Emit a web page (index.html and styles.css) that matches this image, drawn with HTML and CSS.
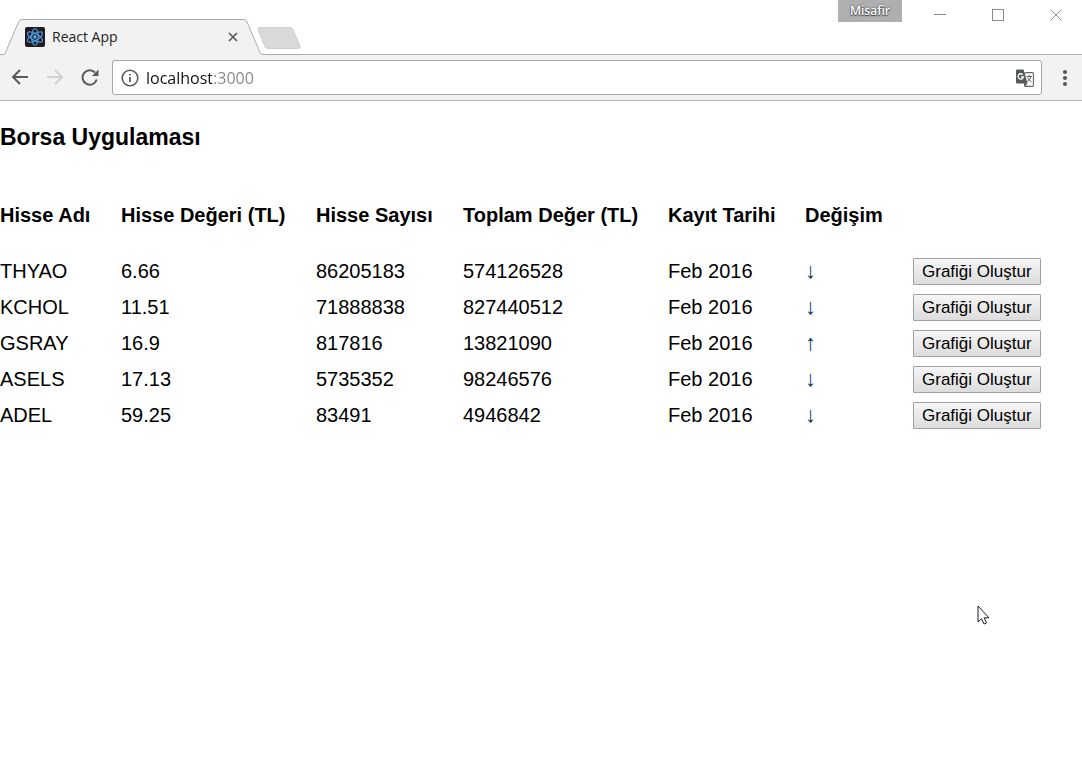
FILE: index.html
```html
<!DOCTYPE html>
<html lang="tr">
<head>
<meta charset="utf-8">
<meta name="viewport" content="width=device-width, initial-scale=1">
<title>React App</title>
<link rel="stylesheet" href="styles.css">
</head>
<body>
<header class="browser">
  <div class="titlebar">
    <div class="tab">
      <svg class="tab-shape" viewBox="0 0 260 36" preserveAspectRatio="none" aria-hidden="true">
        <path d="M0 36 V35.500 Q1.500 35.500 2.500 33.500 L15.500 3 Q16.500 .5 19 .5 H241 Q243 .5 244 3 L257 33.500 Q258 35.500 260 35.500 V36 Z" fill="#f2f2f2"/>
        <path d="M0 35.500 Q1.500 35.500 2.500 33.500 L15.500 3 Q16.500 .5 19 .5 H241 Q243 .5 244 3 L257 33.500 Q258 35.500 260 35.500" fill="none" stroke="#adadad"/>
      </svg>
      <svg class="favicon" viewBox="0 0 20 20" aria-hidden="true">
        <rect width="20" height="20" rx="2" fill="#221a1c"/>
        <g fill="none" stroke="#4a9be0" stroke-width="1.200">
          <ellipse cx="10" cy="10" rx="8.500" ry="3.300" transform="rotate(90 10 10)"/>
          <ellipse cx="10" cy="10" rx="8.500" ry="3.300" transform="rotate(30 10 10)"/>
          <ellipse cx="10" cy="10" rx="8.500" ry="3.300" transform="rotate(150 10 10)"/>
        </g>
        <circle cx="10" cy="10" r="1.700" fill="#61b4f0"/>
      </svg>
      <span class="tab-title">React App</span>
      <button class="tab-close" type="button" aria-label="Sekmeyi kapat">
        <svg width="10" height="10" viewBox="0 0 10 10"><path d="M1 1 L9 9 M9 1 L1 9" stroke="#5a5a5a" stroke-width="1.700"/></svg>
      </button>
    </div>
    <button class="new-tab" type="button" aria-label="Yeni sekme">
      <svg width="44" height="22" viewBox="0 0 44 22"><path d="M3 .5 H33 Q35 .5 36 2.500 L43 19 Q44 21.500 41 21.500 H11 Q9 21.500 8 19.500 L1 3 Q0 .5 3 .5 Z" fill="#d9d9d9" stroke="#cfcfcf"/></svg>
    </button>
    <div class="window-controls">
      <button class="profile" type="button">Misafir</button>
      <button class="window-button" type="button" aria-label="Küçült">
        <svg width="12" height="12" viewBox="0 0 12 12"><path d="M0 5.500 H12" stroke="#8a8a8a"/></svg>
      </button>
      <button class="window-button" type="button" aria-label="Büyüt">
        <svg width="12" height="12" viewBox="0 0 12 12"><rect x=".5" y=".5" width="11" height="11" fill="none" stroke="#8a8a8a"/></svg>
      </button>
      <button class="window-button" type="button" aria-label="Kapat">
        <svg width="12" height="12" viewBox="0 0 12 12"><path d="M.5 .5 L11.500 11.500 M11.500 .5 L.5 11.500" stroke="#8a8a8a"/></svg>
      </button>
    </div>
  </div>
  <div class="toolbar">
    <button class="nav-button" type="button" aria-label="Geri">
      <svg width="18" height="18" viewBox="0 0 18 18"><path d="M17 8 H2 M9 1 L2 8 L9 15" fill="none" stroke="#5a5a5a" stroke-width="2"/></svg>
    </button>
    <button class="nav-button" type="button" aria-label="İleri">
      <svg width="18" height="18" viewBox="0 0 18 18"><path d="M1 8 H16 M9 1 L16 8 L9 15" fill="none" stroke="#d0d0d0" stroke-width="2"/></svg>
    </button>
    <button class="nav-button" type="button" aria-label="Yenile">
      <svg width="18" height="18" viewBox="0 0 18 18"><path d="M15.700 10.500 A7.200 7.200 0 1 1 14 3.500" fill="none" stroke="#5a5a5a" stroke-width="2"/><path d="M17.500 .5 V7 H11 Z" fill="#5a5a5a"/></svg>
    </button>
    <div class="omnibox">
      <svg width="18" height="18" viewBox="0 0 18 18" aria-hidden="true"><circle cx="9" cy="9" r="7.800" fill="none" stroke="#5a5a5a" stroke-width="1.600"/><path d="M9 8 V13 M9 5 V6.600" stroke="#5a5a5a" stroke-width="1.800"/></svg>
      <input class="address" type="text" value="localhost:3000" aria-label="Adres" spellcheck="false">
      <button class="translate" type="button" aria-label="Çevir">
        <svg width="18" height="18" viewBox="0 0 18 18">
          <rect x="8.600" y="3.600" width="8.800" height="13.800" rx="1" fill="#fff" stroke="#6a6462" stroke-width="1.100"/>
          <path d="M1 .5 H7.500 L11.500 14.500 H1.500 Q0 14.500 0 13 V1.500 Q0 .5 1 .5 Z" fill="#545859"/>
          <path d="M8 14.500 H11.500 L9 17.500 Z" fill="#545859"/>
          <path d="M6.800 5.700 A2.700 2.700 0 1 0 7.400 8 H5" fill="none" stroke="#fff" stroke-width="1.300"/>
          <path d="M10.500 7.500 H16 M13.200 6 V7.500 M15 7.500 Q14 11 10.800 13 M11.500 8.500 Q13 11.500 15.500 13" fill="none" stroke="#6a6462"/>
        </svg>
      </button>
    </div>
    <button class="menu" type="button" aria-label="Menü">
      <svg width="6" height="18" viewBox="0 0 6 18"><g fill="#5a5a5a"><circle cx="3" cy="3" r="2.100"/><circle cx="3" cy="9" r="2.100"/><circle cx="3" cy="15" r="2.100"/></g></svg>
    </button>
  </div>
</header>

<main class="page">
  <h1 class="page-title">Borsa Uygulaması</h1>
  <table class="stocks">
    <colgroup>
      <col class="col-name"><col class="col-value"><col class="col-count"><col class="col-total"><col class="col-date"><col class="col-change"><col>
    </colgroup>
    <thead>
      <tr><th>Hisse Adı</th><th>Hisse Değeri (TL)</th><th>Hisse Sayısı</th><th>Toplam Değer (TL)</th><th>Kayıt Tarihi</th><th>Değişim</th><td></td></tr>
    </thead>
    <tbody>
      <tr><td>THYAO</td><td>6.66</td><td>86205183</td><td>574126528</td><td>Feb 2016</td><td class="arrow">↓</td><td><button class="chart-button" type="button">Grafiği Oluştur</button></td></tr>
      <tr><td>KCHOL</td><td>11.51</td><td>71888838</td><td>827440512</td><td>Feb 2016</td><td class="arrow">↓</td><td><button class="chart-button" type="button">Grafiği Oluştur</button></td></tr>
      <tr><td>GSRAY</td><td>16.9</td><td>817816</td><td>13821090</td><td>Feb 2016</td><td class="arrow">↑</td><td><button class="chart-button" type="button">Grafiği Oluştur</button></td></tr>
      <tr><td>ASELS</td><td>17.13</td><td>5735352</td><td>98246576</td><td>Feb 2016</td><td class="arrow">↓</td><td><button class="chart-button" type="button">Grafiği Oluştur</button></td></tr>
      <tr><td>ADEL</td><td>59.25</td><td>83491</td><td>4946842</td><td>Feb 2016</td><td class="arrow">↓</td><td><button class="chart-button" type="button">Grafiği Oluştur</button></td></tr>
    </tbody>
  </table>
</main>

<svg class="pointer" width="13" height="20" viewBox="0 0 13 20" aria-hidden="true"><path d="M1 1 V17 L4.500 13.700 L7 19 L9.500 18 L7.200 12.800 H12 Z" fill="#fff" stroke="#1c1c2c"/></svg>
</body>
</html>
```
FILE: styles.css
```css
* {
  box-sizing: border-box;
}

body {
  margin: 0;
  min-height: 100vh;
  background: #fff;
  color: #000;
  font-family: "Liberation Sans", Arial, sans-serif;
  font-size: 20px;
}

button {
  margin: 0;
  padding: 0;
  border: 0;
  background: none;
  font: inherit;
  color: inherit;
}

svg {
  display: block;
}

.browser {
  font-family: "Open Sans", "Noto Sans", sans-serif;
}

.titlebar {
  display: flex;
  align-items: flex-end;
  height: 55px;
  padding-left: 3px;
  box-shadow: inset 0 -1px #adadad;
}

.tab {
  position: relative;
  z-index: 0;
  display: flex;
  align-items: center;
  width: 260px;
  height: 36px;
  padding: 0 25px 0 22px;
}

.tab-shape {
  position: absolute;
  inset: 0;
  z-index: -1;
  width: 100%;
  height: 100%;
}

.favicon {
  width: 20px;
  height: 20px;
}

.tab-title {
  flex: 1;
  margin-left: 7px;
  font-size: 14px;
  line-height: 20px;
  color: #222;
}

.new-tab {
  margin: 0 0 6px -6px;
}

.window-controls {
  display: flex;
  align-self: flex-start;
  margin-right: -3px;
  margin-left: auto;
}

.profile {
  width: 64px;
  height: 22px;
  margin-right: 9px;
  background: #afafaf;
  color: #fff;
  font-size: 12px;
  font-weight: 600;
  line-height: 20px;
  text-shadow: 0 0 2px #333, 0 1px 1px #444;
}

.window-button {
  display: grid;
  place-items: center;
  width: 58px;
  height: 30px;
}

.toolbar {
  display: flex;
  align-items: center;
  height: 46px;
  padding: 0 14px 0 11px;
  background: #f2f2f2;
  border-bottom: 1px solid #b4b4b4;
}

.nav-button {
  margin-right: 17px;
}

.omnibox {
  display: flex;
  flex: 1;
  align-items: center;
  gap: 7px;
  height: 35px;
  margin-right: 20px;
  margin-left: -4px;
  padding: 0 7px 0 8px;
  background: #fff;
  border: 1px solid #a6a6a6;
  border-radius: 3px;
}

.address {
  flex: 1;
  min-width: 0;
  padding: 0;
  border: 0;
  outline: 0;
  background: linear-gradient(to right, #111 66px, #858585 66px);
  background-clip: text;
  -webkit-background-clip: text;
  color: transparent;
  font-family: inherit;
  font-size: 16px;
  line-height: 24px;
}

.page {
  overflow-x: auto;
}

.page-title {
  margin: 22px 0 0;
  font-size: 23px;
  line-height: 28px;
}

.stocks {
  margin-top: 26px;
  border-collapse: collapse;
  line-height: 24px;
  white-space: nowrap;
}

.stocks th,
.stocks td {
  padding: 0;
  text-align: left;
}

.stocks th {
  height: 76px;
}

.stocks tbody td {
  height: 36px;
}

.stocks .arrow {
  color: #0b3a5c;
  font-size: 22px;
}

.col-name { width: 121px; }
.col-value { width: 195px; }
.col-count { width: 147px; }
.col-total { width: 205px; }
.col-date { width: 137px; }
.col-change { width: 108px; }

.chart-button {
  display: block;
  height: 27px;
  padding: 0 8px;
  background: linear-gradient(#f6f6f6, #dcdcdc);
  border: 1px solid #a0a0a0;
  border-radius: 1px;
  font-size: 17px;
  line-height: 25px;
}

.pointer {
  position: absolute;
  top: 605px;
  left: 977px;
}
```
